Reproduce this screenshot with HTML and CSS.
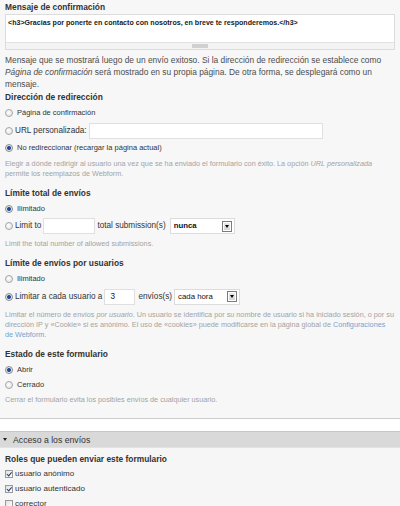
FILE: index.html
```html
<!DOCTYPE html>
<html lang="es">
<head>
    <meta charset="UTF-8">
    <title>Webform</title>
    <link rel="stylesheet" href="styles.css">
</head>
<body>

    <div class="fieldset-body">
        <div class="form-item">
            <div class="label tight">Mensaje de confirmación</div>
            <div class="textarea">
                <div class="textarea-text">&lt;h3&gt;Gracias por ponerte en contacto con nosotros, en breve te responderemos.&lt;/h3&gt;</div>
                <div class="hscroll"><span class="hthumb"></span></div>
            </div>
            <div class="help">Mensaje que se mostrará luego de un envío exitoso. Si la dirección de redirección se establece como <em>Página de confirmación</em> será mostrado en su propia página. De otra forma, se desplegará como un mensaje.</div>
        </div>

        <div class="form-item first-sub">
            <div class="label">Dirección de redirección</div>
            <div class="radio-row"><span class="radio"></span>Página de confirmación</div>
            <div class="radio-row tall"><span class="radio"></span>URL personalizada:<span class="input url"></span></div>
            <div class="radio-row"><span class="radio checked"></span>No redireccionar (recargar la página actual)</div>
            <div class="description">Elegir a dónde redirigir al usuario una vez que se ha enviado el formulario con éxito. La opción <em>URL personalizada</em> permite los reemplazos de Webform.</div>
        </div>

        <div class="form-item">
            <div class="label">Límite total de envíos</div>
            <div class="radio-row"><span class="radio checked"></span>Ilimitado</div>
            <div class="radio-row tall"><span class="radio"></span>Limit to<span class="input total"></span>total submission(s)<span class="select nunca"><b>nunca</b><span class="select-btn"></span></span></div>
            <div class="description">Limit the total number of allowed submissions.</div>
        </div>

        <div class="form-item">
            <div class="label">Límite de envíos por usuarios</div>
            <div class="radio-row"><span class="radio"></span>Ilimitado</div>
            <div class="radio-row tall"><span class="radio checked"></span>Limitar a cada usuario a<span class="input count">3</span>envíos(s)<span class="select hora">cada hora<span class="select-btn"></span></span></div>
            <div class="description">Limitar el número de envíos <em>por usuario</em>. Un usuario se identifica por su nombre de usuario si ha iniciado sesión, o por su dirección IP y «Cookie» si es anónimo. El uso de «cookies» puede modificarse en la página global de <a href="#">Configuraciones de Webform</a>.</div>
        </div>

        <div class="form-item last">
            <div class="label">Estado de este formulario</div>
            <div class="radio-row"><span class="radio checked"></span>Abrir</div>
            <div class="radio-row"><span class="radio"></span>Cerrado</div>
            <div class="description">Cerrar el formulario evita los posibles envíos de cualquier usuario.</div>
        </div>
    </div>

    <div class="legend-bar"><span class="arrow"></span>Acceso a los envíos</div>

    <div class="fieldset-body second">
        <div class="form-item">
            <div class="label check-label">Roles que pueden enviar este formulario</div>
            <div class="check-row"><span class="checkbox checked"></span>usuario anónimo</div>
            <div class="check-row"><span class="checkbox checked"></span>usuario autenticado</div>
            <div class="check-row"><span class="checkbox"></span>corrector</div>
        </div>
    </div>

</body>
</html>
```

FILE: styles.css
```css
* {
    box-sizing: border-box;
    margin: 0;
    padding: 0;
}

body {
    background: #fff;
    font-family: 'Liberation Sans', Arial, sans-serif;
    font-size: 8.4px;
    line-height: 12px;
    color: #494949;
    overflow: hidden;
}

.fieldset-body {
    background: #f7f7f7;
    padding: 1px 5px 13px 5px;
    border-bottom: 1px solid #cdcdcd;
}

.fieldset-body.second {
    background: #f6f6f6;
    border-bottom: none;
    padding-top: 5px;
}

.form-item {
    margin-bottom: 8px;
}

.form-item.first-sub {
    margin-top: -7px;
}

.form-item.last {
    margin-bottom: 0;
}

.label {
    font-weight: bold;
    color: #333;
    height: 12px;
    margin-bottom: 2.5px;
    white-space: nowrap;
}

.label.tight {
    margin-bottom: 1px;
}

.label.check-label {
    margin-bottom: 1.5px;
}

/* fake textarea with its horizontal scrollbar */
.textarea {
    height: 36px;
    background: #fff;
    border: 1px solid #dcdcdc;
    position: relative;
    overflow: hidden;
}

.textarea-text {
    padding: 2px 2px;
    font-weight: bold;
    font-size: 7.1px;
    color: #1a1a1a;
    white-space: nowrap;
}

.hscroll {
    position: absolute;
    left: 0;
    right: 0;
    bottom: 0;
    height: 7px;
    background: #f4f4f4;
    border-top: 1px solid #e2e2e2;
}

.hthumb {
    position: absolute;
    left: 186px;
    width: 16px;
    top: 1px;
    height: 4px;
    background: #d0d0d0;
}

.help {
    margin-top: 4px;
    color: #4d4d4d;
}

.description {
    font-size: 7.25px;
    line-height: 10px;
    color: #a3a3a3;
    margin-top: 3px;
}

.description a {
    color: #6fa5d2;
    text-decoration: none;
}

.radio-row,
.check-row {
    display: flex;
    align-items: center;
    height: 15px;
    color: #333;
    font-size: 7.5px;
    white-space: nowrap;
}

.radio-row.tall {
    height: 20px;
    font-size: 8.2px;
}

.radio {
    width: 8px;
    height: 8px;
    border-radius: 50%;
    border: 1px solid #a6a6a6;
    background: radial-gradient(circle at 40% 40%, #fff 0, #e4e4e4 80%);
    margin: 0 4px 0 0;
    flex: none;
}

.tall .radio {
    margin-right: 2px;
}

.radio.checked {
    background: radial-gradient(circle, #1d3f82 0, #2a56a8 1.6px, #e9e9e9 2.4px, #dcdcdc 100%);
    border-color: #8c8c8c;
}

.check-row {
    font-size: 8px;
}

.checkbox {
    width: 8px;
    height: 8px;
    border: 1px solid #9a9a9a;
    background: linear-gradient(135deg, #e0e0e0, #fff);
    margin-right: 2px;
    flex: none;
    position: relative;
}

.checkbox.checked::after {
    content: '';
    position: absolute;
    left: 1.5px;
    top: 0;
    width: 1.5px;
    height: 3.5px;
    border-right: 1.5px solid #1c3a7a;
    border-bottom: 1.5px solid #1c3a7a;
    transform: rotate(40deg);
}

.input {
    display: inline-block;
    height: 16px;
    background: #fff;
    border: 1px solid #e0e0e0;
    line-height: 14px;
    padding-left: 5px;
    color: #222;
}

.input.url {
    width: 234px;
    margin-left: 2px;
}

.input.total {
    width: 52px;
    margin: 0 2px 0 2px;
}

.input.count {
    width: 31px;
    margin: 0 3px 0 2px;
}

.select {
    display: inline-flex;
    align-items: center;
    justify-content: space-between;
    height: 16px;
    background: #fff;
    border: 1px solid #dcdcdc;
    padding: 0 2px 0 3px;
    color: #111;
    font-size: 7.8px;
}

.select b {
    font-weight: bold;
}

.select.nunca {
    width: 65px;
    margin-left: 4px;
}

.select.hora {
    width: 66px;
    margin-left: 2px;
}

.select-btn {
    width: 10px;
    height: 11px;
    border: 1px solid #7c7c7c;
    box-shadow: inset 0 0 0 1px #fff;
    background: linear-gradient(#eee, #d2d2d2);
    position: relative;
}

.select-btn::after {
    content: '';
    position: absolute;
    left: 2px;
    top: 3px;
    border-left: 2.5px solid transparent;
    border-right: 2.5px solid transparent;
    border-top: 3px solid #000;
}

.legend-bar {
    margin-top: 12px;
    height: 17px;
    background: #d9d9d9;
    border-top: 1px solid #c6c6c6;
    border-bottom: 1px solid #e2e2e2;
    display: flex;
    align-items: center;
    font-size: 8.7px;
    color: #333;
}

.arrow {
    width: 0;
    height: 0;
    border-left: 2.5px solid transparent;
    border-right: 2.5px solid transparent;
    border-top: 3px solid #222;
    margin: 0 6px 0 3px;
}
```
